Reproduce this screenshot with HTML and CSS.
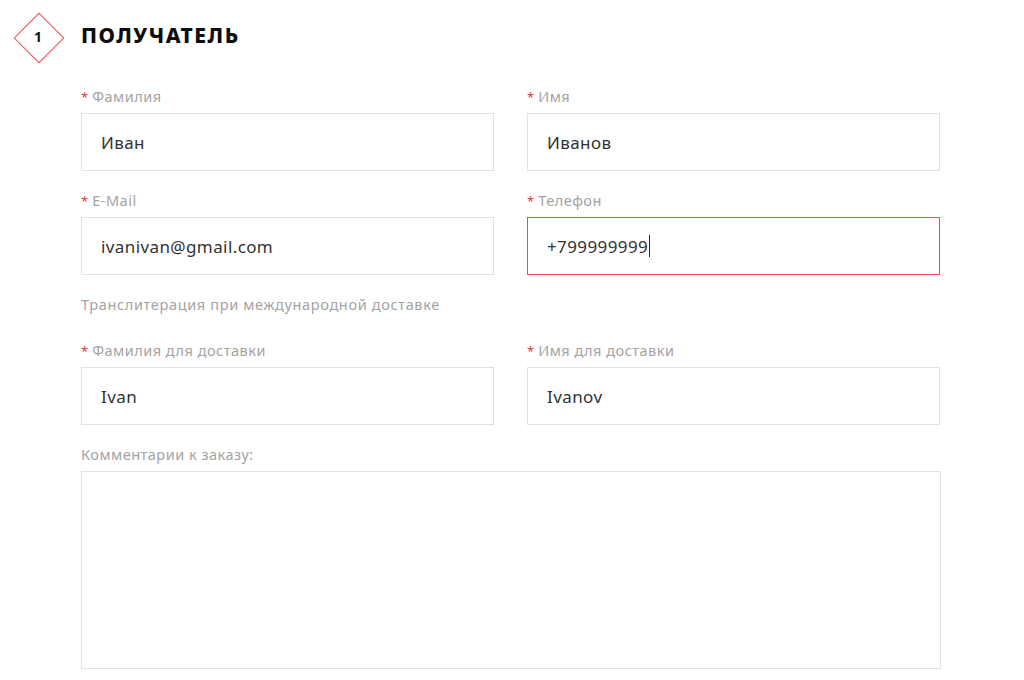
FILE: index.html
```html
<!DOCTYPE html>
<html lang="ru">
<head>
<meta charset="utf-8">
<link rel="stylesheet" href="styles.css">
</head>
<body>
<section class="step">
  <header class="step-head">
    <div class="step-badge"><span class="step-num">1</span></div>
    <h2 class="step-title">ПОЛУЧАТЕЛЬ</h2>
  </header>
  <div class="form">
    <div class="grid">
      <div class="field">
        <div class="label"><span class="req">*</span>Фамилия</div>
        <div class="input">Иван</div>
      </div>
      <div class="field">
        <div class="label"><span class="req">*</span>Имя</div>
        <div class="input">Иванов</div>
      </div>
      <div class="field">
        <div class="label"><span class="req">*</span>E-Mail</div>
        <div class="input">ivanivan@gmail.com</div>
      </div>
      <div class="field">
        <div class="label"><span class="req">*</span>Телефон</div>
        <div class="input input-error">+799999999<span class="caret"></span></div>
      </div>
    </div>
    <p class="note">Транслитерация при международной доставке</p>
    <div class="grid">
      <div class="field">
        <div class="label"><span class="req">*</span>Фамилия для доставки</div>
        <div class="input">Ivan</div>
      </div>
      <div class="field">
        <div class="label"><span class="req">*</span>Имя для доставки</div>
        <div class="input">Ivanov</div>
      </div>
    </div>
    <div class="field">
      <div class="label">Комментарии к заказу:</div>
      <div class="textarea"></div>
    </div>
  </div>
</section>
</body>
</html>
```

FILE: styles.css
```css
* { box-sizing: border-box; }
html, body { margin: 0; padding: 0; background: #fff; }
body {
  font-family: "Noto Sans", "Open Sans", "DejaVu Sans", sans-serif;
  color: #333;
  width: 1024px;
  height: 680px;
  overflow: hidden;
}
.step-head {
  display: flex;
  align-items: center;
  height: 73px;
  padding-left: 14px;
}
.step-badge {
  position: relative;
  width: 48px;
  height: 48px;
  display: flex;
  align-items: center;
  justify-content: center;
}
.step-badge::before {
  content: "";
  position: absolute;
  left: 7px;
  top: 7px;
  width: 34px;
  height: 34px;
  border: 1.5px solid #ee4b4b;
  transform: rotate(45deg);
}
.step-num {
  position: relative;
  font-size: 14px;
  font-weight: 700;
  color: #111;
}
.step-title {
  margin: 0 0 0 19px;
  padding-bottom: 3px;
  font-size: 21px;
  font-weight: 800;
  letter-spacing: 1.5px;
  color: #0d0d0d;
  line-height: 24px;
}
.form {
  margin-left: 81px;
  width: 860px;
  padding-top: 16px;
}
.grid {
  display: grid;
  grid-template-columns: 413px 413px;
  column-gap: 33px;
}
.field { margin-bottom: 22px; }
.label {
  font-size: 14.5px;
  line-height: 15px;
  height: 16px;
  color: #a3a3a3;
  margin-bottom: 8px;
  letter-spacing: 0.5px;
}
.req {
  color: #e53935;
  font-size: 13px;
  letter-spacing: 0;
  margin-right: 4px;
}
.input {
  height: 58px;
  border: 1px solid #e2e2e2;
  padding-left: 19px;
  display: flex;
  align-items: center;
  font-size: 17px;
  letter-spacing: 0.4px;
  color: #333;
}
.input-error { border-color: #ef4a4a; }
.caret {
  display: inline-block;
  width: 1px;
  height: 22px;
  background: #222;
  margin-left: 1px;
}
.note {
  margin: 0 0 30px;
  font-size: 14.5px;
  line-height: 15px;
  height: 16px;
  letter-spacing: 0.65px;
  color: #a3a3a3;
}
.textarea {
  width: 860px;
  height: 198px;
  border: 1px solid #e2e2e2;
}
```
